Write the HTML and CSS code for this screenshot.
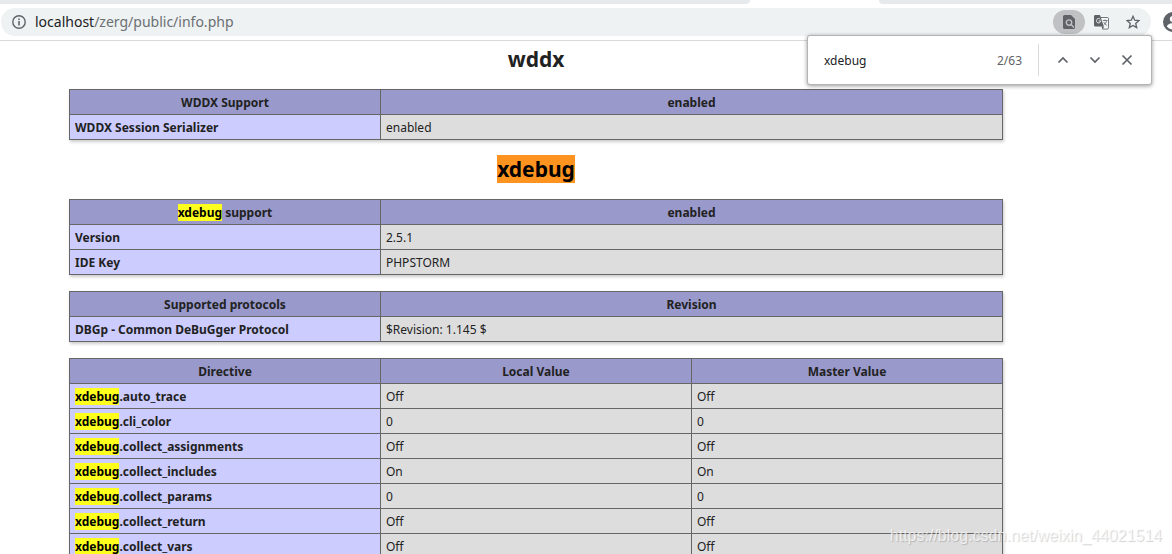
FILE: index.html
```html
<!DOCTYPE html>
<html lang="en">
<head>
<meta charset="utf-8">
<title>phpinfo()</title>
<link rel="stylesheet" href="styles.css">
</head>
<body>
<header class="browser">
  <div class="tabs"><span class="tab tab-left"></span><span class="tab-active"></span><span class="tab tab-right"></span></div>
  <div class="toolbar">
    <div class="address">
      <svg class="info-icon" width="14" height="14" viewBox="0 0 14 14" aria-hidden="true"><circle cx="7" cy="7" r="6.2" fill="none" stroke="#5f6368" stroke-width="1.4"/><path d="M6.2 3.4h1.6V5H6.2zM6.2 6.1h1.6v4.5H6.2z" fill="#5f6368"/></svg>
      <div class="url"><span class="host">localhost</span>/zerg/public/info.php</div>
      <button class="tool tool-on" aria-label="Find in page"><svg width="12" height="14" viewBox="0 0 12 14"><path d="M1.500 0H8l4 4v8.500a1.500 1.500 0 0 1-1.500 1.500h-9A1.500 1.500 0 0 1 0 12.500v-11A1.500 1.500 0 0 1 1.500 0z" fill="#5f6368"/><circle cx="6" cy="7.600" r="2.700" fill="none" stroke="#c0c1c3" stroke-width="1.400"/><path d="M8 9.600l3 3" stroke="#c0c1c3" stroke-width="1.400"/></svg></button>
      <button class="tool" aria-label="Translate"><svg width="15" height="15" viewBox="0 0 15 15"><path d="M6 2.500h7.200a1.300 1.300 0 0 1 1.300 1.300v9a1.300 1.300 0 0 1-1.300 1.300H8.500" fill="#f5f7f7" stroke="#73777b"/><path d="M1.300 0H6l3.800 11.500H1.300A1.300 1.300 0 0 1 0 10.200V1.300A1.300 1.300 0 0 1 1.300 0z" fill="#5f6368"/><path d="M7.500 11.500h2.800L8.500 14.500z" fill="#5f6368"/><path d="M6.200 4.200a2.200 2.200 0 1 0 .6 1.800H4.700" fill="none" stroke="#eef2f2" stroke-width="1"/><path d="M8.800 5.500h4.700M11 4.500v1M12.600 5.500c-.3 2-1.300 3.300-3 4.400M9.700 7c.7 1.500 1.700 2.500 3.200 3.400" fill="none" stroke="#6b6f73" stroke-width=".9"/></svg></button>
      <button class="tool" aria-label="Bookmark"><svg width="14" height="14" viewBox="0 0 14 14"><path d="M7 1.300l1.700 3.900 4.200.4-3.200 2.800 1 4.200L7 10.400l-3.700 2.200 1-4.200L1.100 5.600l4.200-.4z" fill="none" stroke="#5f6368" stroke-width="1.300"/></svg></button>
    </div>
    <button class="avatar" aria-label="Profile"><svg width="20" height="20" viewBox="0 0 20 20"><circle cx="10" cy="10" r="10" fill="#5f6368"/><circle cx="10" cy="7" r="3.200" fill="#fff"/><path d="M3.800 14.500c1-2.500 3.500-3.300 6.200-3.300s5.200.8 6.200 3.300a8 8 0 0 1-12.400 0z" fill="#fff"/></svg></button>
  </div>
</header>
<form class="find">
  <input class="find-text" type="text" value="xdebug" aria-label="Find">
  <span class="find-count">2/63</span>
  <div class="find-actions">
    <button type="button" aria-label="Previous"><svg width="12" height="12" viewBox="0 0 12 12"><path d="M1.500 8.500L6 4l4.500 4.500"/></svg></button>
    <button type="button" aria-label="Next"><svg width="12" height="12" viewBox="0 0 12 12"><path d="M1.500 3.500L6 8l4.500-4.500"/></svg></button>
    <button type="button" aria-label="Close"><svg width="12" height="12" viewBox="0 0 12 12"><path d="M1.500 1.500l9 9M10.500 1.500l-9 9"/></svg></button>
  </div>
</form>
<main class="page">
  <div class="center">
    <h2>wddx</h2>
    <table>
      <tr><th class="third">WDDX Support</th><th>enabled</th></tr>
      <tr><td class="e">WDDX Session Serializer</td><td class="v">enabled</td></tr>
    </table>
    <h2><mark class="current">xdebug</mark></h2>
    <table>
      <tr><th class="third"><mark>xdebug</mark> support</th><th>enabled</th></tr>
      <tr><td class="e">Version</td><td class="v">2.5.1</td></tr>
      <tr><td class="e">IDE Key</td><td class="v">PHPSTORM</td></tr>
    </table>
    <table>
      <tr><th class="third">Supported protocols</th><th>Revision</th></tr>
      <tr><td class="e">DBGp - Common DeBuGger Protocol</td><td class="v">$Revision: 1.145 $</td></tr>
    </table>
    <table>
      <tr><th class="third">Directive</th><th class="third">Local Value</th><th>Master Value</th></tr>
      <tr><td class="e"><mark>xdebug</mark>.auto_trace</td><td class="v">Off</td><td class="v">Off</td></tr>
      <tr><td class="e"><mark>xdebug</mark>.cli_color</td><td class="v">0</td><td class="v">0</td></tr>
      <tr><td class="e"><mark>xdebug</mark>.collect_assignments</td><td class="v">Off</td><td class="v">Off</td></tr>
      <tr><td class="e"><mark>xdebug</mark>.collect_includes</td><td class="v">On</td><td class="v">On</td></tr>
      <tr><td class="e"><mark>xdebug</mark>.collect_params</td><td class="v">0</td><td class="v">0</td></tr>
      <tr><td class="e"><mark>xdebug</mark>.collect_return</td><td class="v">Off</td><td class="v">Off</td></tr>
      <tr><td class="e"><mark>xdebug</mark>.collect_vars</td><td class="v">Off</td><td class="v">Off</td></tr>
    </table>
  </div>
</main>
<div class="watermark">https://blog.csdn.net/weixin_44021514</div>
</body>
</html>
```
FILE: styles.css
```css
* { box-sizing: border-box; }
body {
  margin: 0;
  height: 100vh;
  overflow: hidden;
  display: flex;
  flex-direction: column;
  background: #fff;
  color: #222;
  font-family: "Noto Sans", "Open Sans", sans-serif;
  font-size: 12px;
}
button {
  border: 0;
  padding: 0;
  background: none;
  display: flex;
  align-items: center;
  justify-content: center;
}
.browser { flex: none; border-bottom: 1px solid #d7d9dd; }
.tabs { display: flex; height: 4px; }
.tab { background: #e7eaed; }
.tab-left { flex: 750; border-bottom-right-radius: 4px; }
.tab-active { flex: 129; }
.tab-right { flex: 293; border-bottom-left-radius: 4px; }
.toolbar {
  display: flex;
  align-items: center;
  gap: 12px;
  height: 36px;
  padding-left: 1px;
  overflow: hidden;
}
.address {
  flex: 1;
  display: flex;
  align-items: center;
  height: 28px;
  padding: 0 2px 0 11px;
  border-radius: 14px;
  background: #eef2f2;
}
.info-icon { margin-right: 9px; }
.url { flex: 1; font-size: 14px; line-height: 20px; color: #6b6f73; }
.host { color: #202124; }
.tool { width: 32px; height: 24px; border-radius: 12px; }
.tool-on { background: #c0c1c3; }
.avatar { flex: none; width: 20px; margin-right: -11px; }
.find {
  position: absolute;
  top: 36px;
  right: 21px;
  width: 343px;
  height: 48px;
  display: flex;
  align-items: center;
  padding: 0 8px 0 16px;
  background: #fff;
  border-radius: 2px;
  box-shadow: 0 0 0 1px #b4b4b4, 0 1px 4px 1px rgba(0, 0, 0, .4);
}
.find-text {
  flex: 1;
  min-width: 0;
  border: 0;
  padding: 2px 0 0;
  outline: 0;
  background: none;
  color: #202124;
  font: inherit;
  line-height: 20px;
}
.find-count { color: #5f6368; margin-right: 16px; padding-top: 2px; line-height: 20px; }
.find-actions {
  display: flex;
  height: 32px;
  padding-left: 8px;
  border-left: 1px solid #d9dadc;
}
.find-actions button { width: 32px; }
.find-actions path { fill: none; stroke: #5f6368; stroke-width: 1.7; }
.page { flex: 1; min-height: 0; overflow: hidden; padding: 5px 100px 0 0; }
.center { max-width: 934px; margin: 0 auto; }
h2 {
  margin: 0 0 16px;
  font-size: 21px;
  line-height: 27px;
  text-align: center;
}
table {
  width: 100%;
  table-layout: fixed;
  border-collapse: collapse;
  margin-bottom: 16px;
  box-shadow: 1px 2px 3px #ccc;
}
th, td {
  border: 1px solid #666;
  padding: 5px 5px 3px;
  line-height: 16px;
}
th { background: #9999cc; }
.third { width: 33.33%; }
.e { background: #ccccff; font-weight: 700; }
.v { background: #ddd; }
mark { background: #ffff1e; color: #000; }
.current { background: #ff9320; }
.watermark {
  position: absolute;
  right: 10px;
  bottom: 8px;
  font: 16px/20px "Liberation Sans", sans-serif;
  color: rgba(255, 255, 255, .7);
  text-shadow: 1px 1px 1px rgba(0, 0, 0, .18);
}
```
